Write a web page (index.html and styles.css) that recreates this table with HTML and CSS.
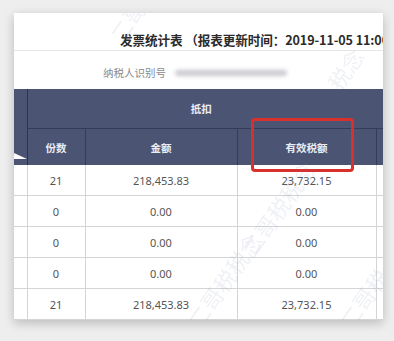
FILE: index.html
```html
<!DOCTYPE html>
<html lang="zh">
<head>
<meta charset="utf-8">
<link rel="stylesheet" href="styles.css">
</head>
<body>
<div class="card">
  <div class="title-row">发票统计表 （报表更新时间：2019-11-05 11:00:00）</div>
  <div class="tax-row">
    <span class="tax-label">纳税人识别号</span>
    <span class="tax-value"></span>
  </div>
  <table class="grid">
    <colgroup>
      <col class="c-stub"><col class="c-count"><col class="c-amount"><col class="c-tax"><col class="c-rest">
    </colgroup>
    <thead>
      <tr class="h1">
        <th class="stub" rowspan="2">
          <svg class="wedge" width="13" height="6" viewBox="0 0 13 6"><polygon points="0,0 0,6 13,6" fill="#ffffff"/></svg>
        </th>
        <th colspan="4" class="group">抵扣</th>
      </tr>
      <tr class="h2">
        <th>份数</th>
        <th>金额</th>
        <th>有效税额</th>
        <th class="rest"></th>
      </tr>
    </thead>
    <tbody>
      <tr><td class="stub"></td><td>21</td><td>218,453.83</td><td>23,732.15</td><td class="rest"></td></tr>
      <tr><td class="stub"></td><td>0</td><td>0.00</td><td>0.00</td><td class="rest"></td></tr>
      <tr><td class="stub"></td><td>0</td><td>0.00</td><td>0.00</td><td class="rest"></td></tr>
      <tr><td class="stub"></td><td>0</td><td>0.00</td><td>0.00</td><td class="rest"></td></tr>
      <tr><td class="stub"></td><td>21</td><td>218,453.83</td><td>23,732.15</td><td class="rest"></td></tr>
    </tbody>
  </table>
  <div class="highlight"></div>
  <div class="watermarks">
    <span class="wm wm1">二哥税税念</span>
    <span class="wm wm2">二哥税税念</span>
    <span class="wm wm3">二哥税</span>
    <span class="wm wm4">税念</span>
    <span class="wm wm5">二哥</span>
  </div>
</div>
</body>
</html>
```

FILE: styles.css
```css
html, body {
  margin: 0;
  padding: 0;
}
body {
  background: #eeeeee;
  width: 394px;
  height: 341px;
  overflow: hidden;
  font-family: "Noto Sans", "Noto Sans CJK SC", sans-serif;
}
.card {
  position: relative;
  margin: 13px 11px 0 14px;
  width: 369px;
  height: 307px;
  background: #ffffff;
  overflow: hidden;
  box-shadow: 0 3px 10px rgba(0, 0, 0, 0.22);
}
.title-row {
  box-sizing: border-box;
  height: 38px;
  padding: 19px 0 0 106px;
  border-bottom: 1px solid #e6e6e6;
  font-family: "Noto Sans CJK SC", sans-serif;
  font-weight: 700;
  font-size: 12.6px;
  line-height: 16px;
  letter-spacing: -0.1px;
  color: #2b2b2b;
  white-space: nowrap;
  overflow: hidden;
}
.tax-row {
  box-sizing: border-box;
  height: 38px;
  padding: 15px 0 0 89px;
  display: flex;
  align-items: flex-start;
  gap: 9px;
}
.tax-label {
  font-family: "Noto Sans CJK SC", sans-serif;
  font-size: 10.5px;
  line-height: 14px;
  color: #8a8a8a;
  white-space: nowrap;
}
.tax-value {
  margin-top: 4px;
  width: 112px;
  height: 6px;
  background: #c9c9cf;
  border-radius: 3px;
  filter: blur(2px);
}
.grid {
  width: 369px;
  table-layout: fixed;
  border-collapse: collapse;
  border-spacing: 0;
}
.c-stub { width: 13px; }
.c-count { width: 58px; }
.c-amount { width: 152px; }
.c-tax { width: 139px; }
.c-rest { width: 7px; }
.grid th {
  background: #4b5573;
  color: #e9ecf3;
  font-family: "Noto Sans CJK SC", sans-serif;
  font-weight: 700;
  font-size: 10.5px;
  padding: 0;
  text-align: center;
}
.grid .h1 th { height: 39px; }
.grid .h1 .group {
  border-bottom: 1px solid #343d57;
  padding-right: 8px;
}
.grid .h2 th {
  height: 36px;
  border-right: 1px solid #343d57;
}
.grid .h2 th.rest { border-right: none; }
.grid th.stub {
  position: relative;
  border-right: 1px solid #2c3550;
}
.wedge {
  position: absolute;
  left: 0;
  bottom: 6px;
}
.grid td {
  height: 30px;
  padding: 0;
  text-align: center;
  font-size: 11px;
  color: #555555;
  border-right: 1px solid #d4d4d4;
  border-bottom: 1px solid #d4d4d4;
}
.grid td.rest { border-right: none; }
.highlight {
  position: absolute;
  left: 237px;
  top: 105px;
  width: 97px;
  height: 48px;
  border: 3px solid #d8302c;
  border-radius: 4px;
}
.watermarks {
  position: absolute;
  inset: 0;
  pointer-events: none;
}
.wm {
  position: absolute;
  font-family: "Noto Sans CJK SC", sans-serif;
  font-size: 22px;
  line-height: 24px;
  color: rgba(120, 140, 190, 0.13);
  white-space: nowrap;
  transform: rotate(-55deg);
  transform-origin: left center;
}
.wm1 { left: 232px; top: 228px; }
.wm2 { left: 178px; top: 300px; }
.wm3 { left: 330px; top: 300px; }
.wm4 { left: 318px; top: 62px; }
.wm5 { left: 100px; top: 14px; }
```
